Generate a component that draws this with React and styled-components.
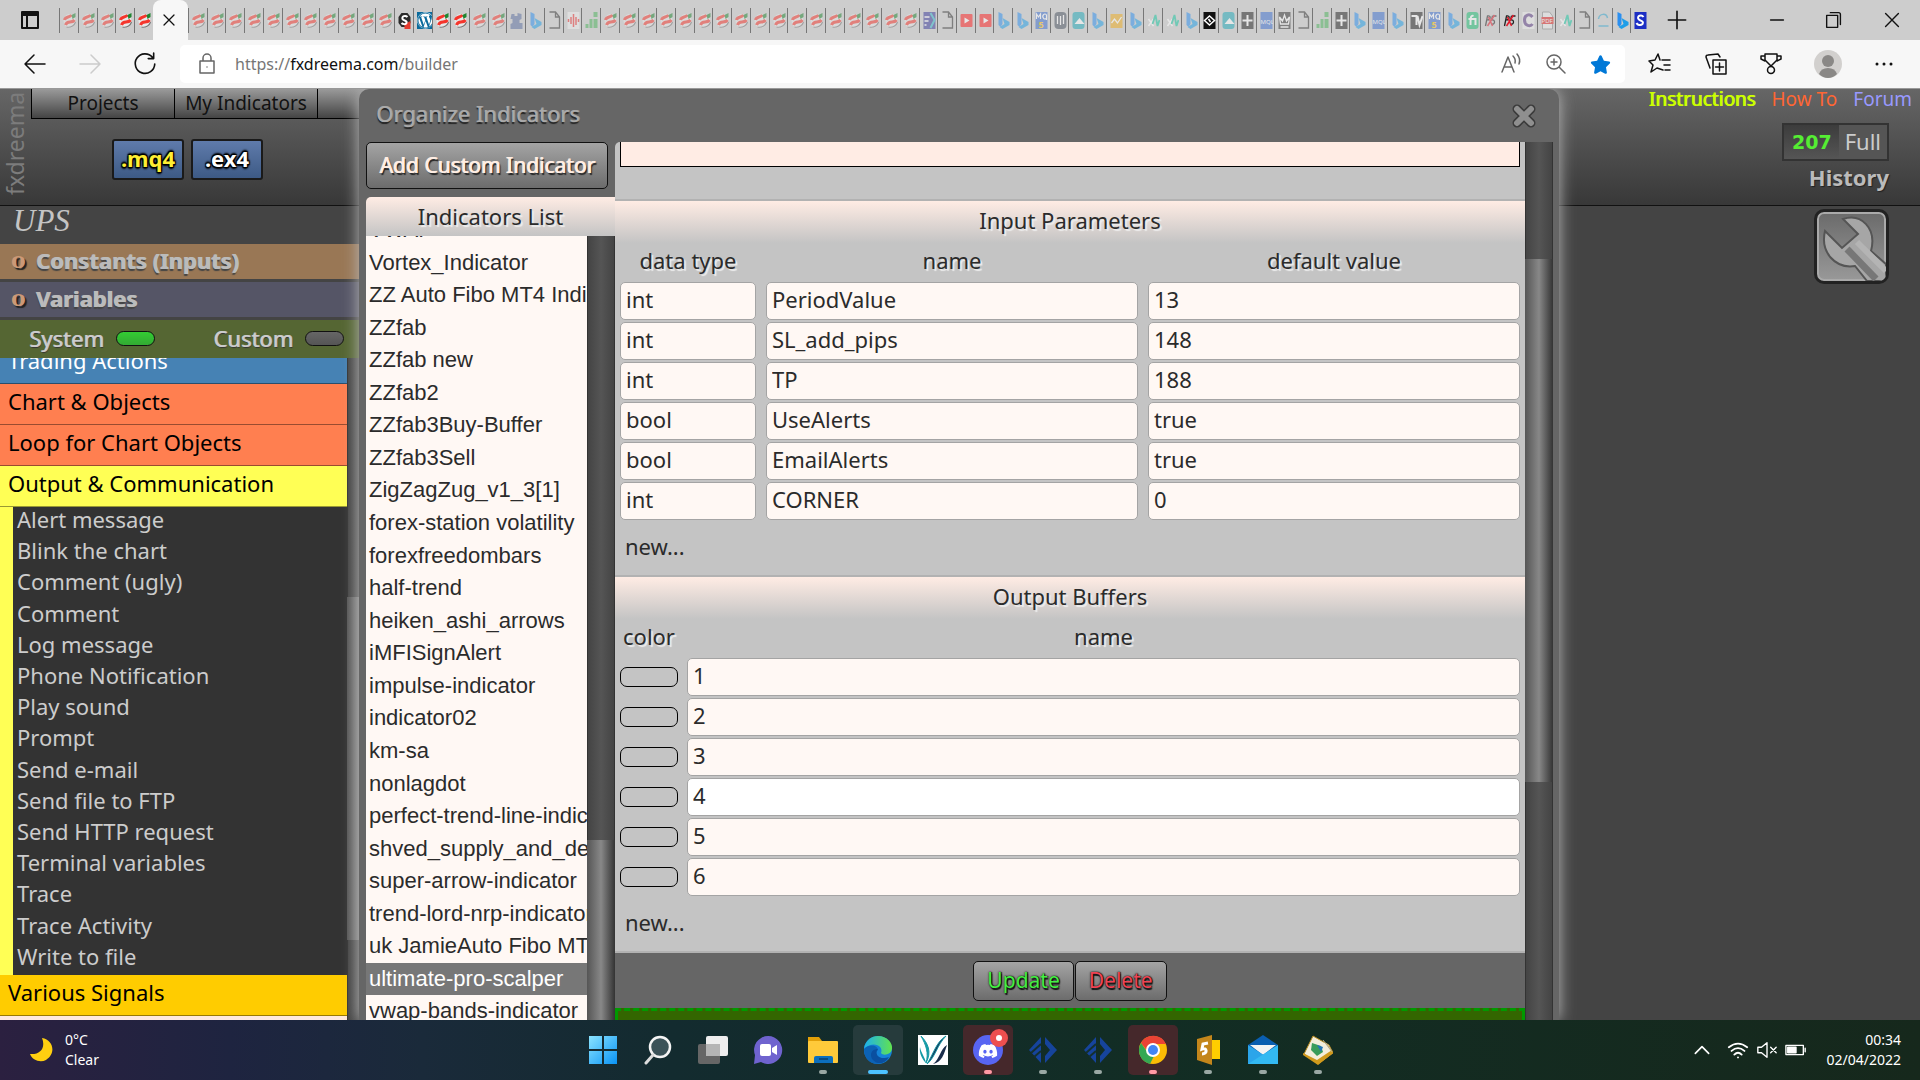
import React, { useLayoutEffect, useRef } from 'react';
import styled, { createGlobalStyle, css } from 'styled-components';
import { FaDiscord, FaStar, FaWordpress } from 'react-icons/fa6';

const repeat = (kind, count) => Array(count).fill(kind);

const LEFT_TABS = ['fx', 'fx', 'fx', 'fx!', 'fx!'];

const RIGHT_TABS = [
  ...repeat('fx', 11), 'stop!', 'wordpress!', 'fx!', 'fx!', 'fx', 'fx', 'puzzle', 'bing', 'doc', 'wave', 'bars',
  ...repeat('fx', 17), 'forex', 'doc', 'video', 'video', 'bing', 'bing', 'mql5', 'pill', 'teal', 'bing', 'gold',
  'bing', 'xa', 'xa', 'bing', 'diamond!', 'teal', 'plus', 'mql', 'crown', 'doc', 'bars', 'plus', 'bing', 'mql',
  'bing', 'tv', 'mql5', 'bing', 'fi', 'px', 'px!', 'cc', 'pdf', 'xa', 'doc', 'loop', 'bing!', 'ess!',
];

const CATEGORIES = [
  { label: 'Trading Actions', color: '#4682b4', light: true },
  { label: 'Chart & Objects', color: '#ff7f50' },
  { label: 'Loop for Chart Objects', color: '#ff7f50' },
  { label: 'Output & Communication', color: '#ffff55' },
];

const BLOCKS = [
  'Alert message', 'Blink the chart', 'Comment (ugly)', 'Comment', 'Log message', 'Phone Notification',
  'Play sound', 'Prompt', 'Send e-mail', 'Send file to FTP', 'Send HTTP request', 'Terminal variables',
  'Trace', 'Trace Activity', 'Write to file',
];

const INDICATORS = [
  'VWAP', 'Vortex_Indicator', 'ZZ Auto Fibo MT4 Indicator', 'ZZfab', 'ZZfab new', 'ZZfab2', 'ZZfab3Buy-Buffer',
  'ZZfab3Sell', 'ZigZagZug_v1_3[1]', 'forex-station volatility', 'forexfreedombars', 'half-trend',
  'heiken_ashi_arrows', 'iMFISignAlert', 'impulse-indicator', 'indicator02', 'km-sa', 'nonlagdot',
  'perfect-trend-line-indicator', 'shved_supply_and_demand', 'super-arrow-indicator', 'trend-lord-nrp-indicator',
  'uk JamieAuto Fibo MT4', 'ultimate-pro-scalper', 'vwap-bands-indicator',
];

const PARAMS = [
  ['int', 'PeriodValue', '13'],
  ['int', 'SL_add_pips', '148'],
  ['int', 'TP', '188'],
  ['bool', 'UseAlerts', 'true'],
  ['bool', 'EmailAlerts', 'true'],
  ['int', 'CORNER', '0'],
];

const BUFFERS = ['1', '2', '3', '4', '5', '6'];

const FAVICONS = {
  fx: <>
    <ellipse cx="6" cy="10" rx="6" ry="7" fill="#e8e8e8" />
    <path d="M3 16C8 17 11 14 12 11" stroke="#777" strokeWidth="1.200" fill="none" />
    <path d="M1 9C2 5 6 7 8 4" stroke="#f5352c" strokeWidth="3" fill="none" />
    <path d="M2 14C4 9 8 13 11 9" stroke="#f5352c" strokeWidth="3" fill="none" />
    <path d="M8 4L12 2V6L9 8Z" fill="#1f8530" />
  </>,
  stop: <>
    <path d="M3 2H9L12 6V12L9 16H3L0 12V6Z" fill="#2b2b2b" />
    <path d="M6 13L12 10V18H6Z" fill="#e33b2e" />
    <path d="M9 6C7 4 3 5 4 8C5 10 9 9 8 12C7 14 4 13 3 12" stroke="#fff" strokeWidth="2" fill="none" />
  </>,
  puzzle: <path d="M1 3H4V5H7V2L11 3V8L9 9V12H12V18H0V13L2 12V8H0Z" fill="#5b6fa0" />,
  bing: <>
    <path d="M1 1L5 3V13L3 16L1 14Z" fill="#2b8ff0" />
    <path d="M5 7L12 11V14L5 18L2 16L7 13Z" fill="#1f9ee8" />
  </>,
  doc: <path d="M1 1H7L11 6V17H1M7 1V6H11" stroke="#333" strokeWidth="1.300" fill="none" />,
  wave: <>
    <rect y="1" width="12" height="17" fill="#f0f0f0" />
    <path d="M1 8V11M3.500 6V13M6 3V16M8.500 6V14M11 8V11" stroke="#e33" strokeWidth="1.500" />
  </>,
  bars: <path d="M0 13H3V17H0ZM4 8H7V17H4ZM8 1H12V6H8ZM8 8H12V17H8Z" fill="#4cb25a" />,
  forex: <>
    <rect y="1" width="12" height="17" fill="#3a3a9a" />
    <path d="M1 6H6M1 10H5M1 14H3" stroke="#fff" strokeWidth="1.500" />
    <path d="M7 2L11 9L7 17" stroke="#3bc" strokeWidth="2" fill="none" />
  </>,
  video: <>
    <rect y="3" width="12" height="13" rx="1" fill="#ff1f1f" />
    <path d="M4 6.500L9 9.500L4 12.500Z" fill="#fff" />
  </>,
  mql5: <>
    <rect y="1" width="12" height="17" fill="#3c6fd0" />
    <path d="M1 8V3L3 6L5 3V8M11 7A2 2.500 0 1 1 11 4V9" stroke="#fff" strokeWidth="1.200" fill="none" />
    <text x="3" y="17" fontSize="9" fontWeight="700" fill="#ffc400">5</text>
  </>,
  mql: <>
    <rect y="1" width="12" height="17" fill="#3c6fd0" />
    <text x="0" y="13" fontSize="6" fill="#fff">MQL</text>
  </>,
  pill: <>
    <rect y="1" width="12" height="17" rx="4" fill="#4a5260" />
    <path d="M3 5V13M6 5V14M9 4V13" stroke="#fff" strokeWidth="1.300" />
  </>,
  teal: <>
    <rect y="1" width="12" height="17" rx="3" fill="#1fa8b8" />
    <path d="M2 13L7 7L12 13Z" fill="#fff" />
  </>,
  gold: <>
    <rect y="3" width="12" height="14" fill="#f0ad1e" />
    <path d="M1 12L4 8L7 12L11 6" stroke="#fff" strokeWidth="1.300" fill="none" />
  </>,
  xa: <>
    <path d="M1 8L6 15M6 8L1 15" stroke="#fff" strokeWidth="1.500" />
    <path d="M5 13L8 4L10 15L12 9" stroke="#16c7a0" strokeWidth="1.800" fill="none" />
  </>,
  diamond: <>
    <rect y="1" width="12" height="17" fill="#111" />
    <path d="M1 9.500L6 5L11 9.500L6 14ZM5 8L7 11" stroke="#fff" strokeWidth="1.500" fill="none" />
  </>,
  plus: <>
    <rect y="1" width="12" height="17" fill="#222" />
    <path d="M1 9.500H11M6 4V15" stroke="#fff" strokeWidth="2" />
  </>,
  crown: <>
    <rect y="1" width="12" height="17" fill="#333" />
    <path d="M1 6L4 10L6 4L8 10L11 6L10 13H2ZM2 16H10" stroke="#fff" strokeWidth="1.300" fill="none" />
  </>,
  tv: <>
    <rect y="1" width="12" height="17" fill="#222" />
    <path d="M1 5H6V14M7 5L9 14L12 5" stroke="#fff" strokeWidth="2" fill="none" />
  </>,
  fi: <>
    <rect y="1" width="12" height="17" rx="3" fill="#1dbf73" />
    <path d="M7 5C4 4 4 7 4 14M2 8H9V14" stroke="#fff" strokeWidth="2" fill="none" />
  </>,
  px: <>
    <path d="M1 15L3 5C7 4 6 9 3 9M8 5H12M8 5L7 9C11 8 11 14 7 13" stroke="#222" strokeWidth="1.300" fill="none" />
    <path d="M4 6L8 15M10 4L3 15" stroke="#e31b2c" strokeWidth="1.500" />
  </>,
  cc: <>
    <rect y="1" width="12" height="17" fill="#eee" />
    <path d="M10 6C7 2 2 4 2 9C2 15 8 16 10 13" stroke="#5b3b85" strokeWidth="3" fill="none" />
  </>,
  pdf: <>
    <path d="M1 1H8L11 5V18H1Z" fill="#eee" stroke="#888" />
    <rect y="6" width="12" height="7" fill="#e02020" />
    <text x="0" y="12" fontSize="6" fill="#fff">PDF</text>
  </>,
  loop: <path d="M1 8C2 2 9 2 10 7M1 15H11" stroke="#35a7cf" strokeWidth="1.500" fill="none" />,
  ess: <>
    <rect y="1" width="12" height="17" fill="#1d2fc4" />
    <path d="M9 6C7 3 2 5 4 8C5 10 10 10 8 13C6 15 3 14 2 12" stroke="#fff" strokeWidth="2" fill="none" />
  </>,
};

const Favicon = ({ kind }) => {
  const name = kind.replace('!', '');
  const faded = !kind.endsWith('!');
  if (name === 'wordpress') {
    return <WordpressBox><FaWordpress size={17} /></WordpressBox>;
  }
  return (
    <FaviconSvg $faded={faded} width="13" height="19" viewBox="0 0 12 19">{FAVICONS[name]}</FaviconSvg>
  );
};

const Line = ({ d, size = 24, color = '#111', width = 1.5, children }) => (
  <svg width={size} height={size} viewBox="0 0 24 24" fill="none" stroke={color} strokeWidth={width}
    strokeLinecap="round" strokeLinejoin="round" aria-hidden="true">
    <path d={d} />
    {children}
  </svg>
);

// A pane that opens already scrolled down by `start` pixels
const ScrollPane = ({ start = 0, children, as: Pane }) => {
  const ref = useRef(null);
  useLayoutEffect(() => {
    ref.current.scrollTop = start;
  }, [start]);
  return <Pane ref={ref}>{children}</Pane>;
};

const Browser = () => (
  <>
    <TabStrip>
      <IconButton aria-label="Tab actions">
        <Line size={24} width={2} d="M4 4H20V20H4ZM9 8V20">
          <path d="M4 5H20V7H4Z" fill="#111" />
        </Line>
      </IconButton>
      <TabGroup $count={LEFT_TABS.length}>
        {LEFT_TABS.map((kind, i) => <Tab key={i}><Favicon kind={kind} /></Tab>)}
      </TabGroup>
      <ActiveTab>
        <IconButton aria-label="Close tab"><Line size={20} d="M6 6L18 18M18 6L6 18" /></IconButton>
      </ActiveTab>
      <TabGroup $count={RIGHT_TABS.length} $grow>
        {RIGHT_TABS.map((kind, i) => <Tab key={i}><Favicon kind={kind} /></Tab>)}
      </TabGroup>
      <WindowButtons>
        <IconButton aria-label="New tab"><Line size={26} d="M4 12H20M12 4V20" /></IconButton>
        <span />
        <IconButton aria-label="Minimize"><Line size={22} d="M5 12H19" /></IconButton>
        <IconButton aria-label="Restore">
          <Line size={22} d="M4 7H16V20H4ZM8 4H17Q19 4 19 6V17" />
        </IconButton>
        <IconButton aria-label="Close"><Line size={22} d="M5 5L19 19M19 5L5 19" /></IconButton>
      </WindowButtons>
    </TabStrip>
    <Toolbar>
      <NavButtons>
        <IconButton aria-label="Back"><Line d="M22 12H2M11 3L2 12L11 21" /></IconButton>
        <IconButton aria-label="Forward"><Line color="#ccc" d="M2 12H22M13 3L22 12L13 21" /></IconButton>
        <IconButton aria-label="Refresh"><Line size={26} d="M19 6A9 9 0 1 0 21 12M20 2V7H15" /></IconButton>
      </NavButtons>
      <AddressBar>
        <Line size={24} color="#666" d="M5 9H19V21H5ZM8 9V6A4 4 0 0 1 16 6V9M12 15V15.100" />
        <Address>https://<b>fxdreema.com</b>/builder</Address>
        <BarIcon aria-label="Read aloud">
          <Line color="#666" d="M3 20L9 5L15 20M5 15H13M14 4Q17 7 16 11M18 2Q22 7 20 12" />
        </BarIcon>
        <BarIcon aria-label="Zoom">
          <Line color="#666" d="M17 10A7 7 0 1 1 3 10A7 7 0 1 1 17 10M15 15L21 21M7 10H13M10 7V13" />
        </BarIcon>
        <BarIcon aria-label="Favorite"><FaStar size={21} color="#0078d7" /></BarIcon>
      </AddressBar>
      <ToolIcons>
        <IconButton aria-label="Favorites">
          <Line d="M14 8H22M16 13H22M17 18H22M15 18L9 16L3 20L5 13L1 9L7 8L10 2L12 8" />
        </IconButton>
        <IconButton aria-label="Collections">
          <Line d="M9 8H22V22H9ZM15.500 11V19M11.500 15H19.500M6 16L2 5Q2 3 4 3L14 2L16 5" />
        </IconButton>
        <IconButton aria-label="Rewards">
          <Line d="M5 2H17V8L11 14L5 8ZM5 4H1V7L5 9M17 4H21V7L17 9M14.500 18A3.500 3.500 0 1 1 7.500 18A3.500 3.500 0 1 1 14.500 18" />
        </IconButton>
        <IconButton aria-label="Profile">
          <svg width="28" height="28" viewBox="0 0 28 28">
            <circle cx="14" cy="14" r="14" fill="#d2d0ce" />
            <circle cx="14" cy="11" r="6" fill="#8a8886" />
            <path d="M5 24Q7 18 14 18T23 24Q19 28 14 28T5 24Z" fill="#8a8886" />
          </svg>
        </IconButton>
        <IconButton aria-label="More"><Line width={3} d="M5 12V12.100M12 12V12.100M19 12V12.100" /></IconButton>
      </ToolIcons>
    </Toolbar>
  </>
);

const Sidebar = () => (
  <Side>
    <ProjectName>UPS</ProjectName>
    <SideRow $color="#997755"><Ring>o</Ring>Constants (Inputs)</SideRow>
    <SideRow $color="#555566"><Ring>o</Ring>Variables</SideRow>
    <Filters>
      <label>System <Toggle type="checkbox" defaultChecked /></label>
      <label>Custom <Toggle type="checkbox" /></label>
    </Filters>
    <SideBody>
      <ScrollPane as={CategoryPane} start={15}>
        {CATEGORIES.map(({ label, color, light }) => (
          <Category key={label} $color={color} $light={light}>{label}</Category>
        ))}
        <BlockList>
          {BLOCKS.map(block => <li key={block}>{block}</li>)}
        </BlockList>
        <Category $color="#ffcc00">Various Signals</Category>
        <Category $color="#ffe9dc" aria-label="More signals" />
      </ScrollPane>
      <ScrollTrack>
        <TrackSpace $size={239} />
        <ScrollThumb $size={343} />
        <TrackSpace $size={80} />
      </ScrollTrack>
    </SideBody>
  </Side>
);

const Organizer = () => (
  <Modal role="dialog" aria-label="Organize Indicators">
    <ModalHeader>
      <h2>Organize Indicators</h2>
      <IconButton aria-label="Close dialog">
        <svg width="26" height="26" viewBox="0 0 26 26">
          <path d="M6 6L20 20M20 6L6 20" stroke="#3a3a3a" strokeWidth="9" strokeLinecap="round" />
          <path d="M6 6L20 20M20 6L6 20" stroke="#8f8f8f" strokeWidth="6" strokeLinecap="round" />
        </svg>
      </IconButton>
    </ModalHeader>
    <ModalBody>
      <ListColumn>
        <AddButton>Add Custom Indicator</AddButton>
        <ListTitle>Indicators List</ListTitle>
        <ListBody>
          <ScrollPane as={IndicatorPane} start={22}>
            <IndicatorList>
              {INDICATORS.map(name => (
                <Indicator key={name} $selected={name === 'ultimate-pro-scalper'}>{name}</Indicator>
              ))}
            </IndicatorList>
          </ScrollPane>
          <ScrollTrack>
            <TrackSpace $size={604} />
            <ScrollThumb $size={180} />
          </ScrollTrack>
        </ListBody>
      </ListColumn>
      <Details>
        <Description aria-label="Description" />
        <Section>
          <SectionTitle>Input Parameters</SectionTitle>
          <ParamGrid>
            <Label>data type</Label>
            <Label>name</Label>
            <Label>default value</Label>
            {PARAMS.map(([type, name, value]) => (
              <React.Fragment key={name}>
                <Field defaultValue={type} aria-label={`${name} type`} />
                <Field defaultValue={name} aria-label={`${name} name`} />
                <Field defaultValue={value} aria-label={`${name} default value`} />
              </React.Fragment>
            ))}
          </ParamGrid>
          <NewButton>new...</NewButton>
        </Section>
        <Section>
          <SectionTitle>Output Buffers</SectionTitle>
          <BufferGrid>
            <Label>color</Label>
            <Label>name</Label>
            {BUFFERS.map(buffer => (
              <React.Fragment key={buffer}>
                <ColorPill aria-label={`Color of buffer ${buffer}`} />
                <Field defaultValue={buffer} aria-label={`Name of buffer ${buffer}`} $active={buffer === '4'} />
              </React.Fragment>
            ))}
          </BufferGrid>
          <NewButton>new...</NewButton>
        </Section>
        <Actions>
          <ActionButton $color="#44ee44">Update</ActionButton>
          <ActionButton $color="#ee4455">Delete</ActionButton>
        </Actions>
        <DropArea />
      </Details>
      <ScrollTrack>
        <TrackSpace $size={117} />
        <ScrollThumb $size={523} />
        <TrackSpace $size={238} />
      </ScrollTrack>
    </ModalBody>
  </Modal>
);

const Builder = () => (
  <Page>
    <PageHeader>
      <Brand href="#">fxdreema</Brand>
      <HeaderLeft>
        <Menu>
          <MenuItem $wide>Projects</MenuItem>
          <MenuItem $wide>My Indicators</MenuItem>
          <MenuItem aria-label="More menus" />
        </Menu>
        <Exports>
          <ExportButton $color="#ffee33">.mq4</ExportButton>
          <ExportButton $color="#ffffff">.ex4</ExportButton>
        </Exports>
      </HeaderLeft>
      <HeaderRight>
        <Links>
          <HeaderLink href="#" $color="#ccff00" $strong>Instructions</HeaderLink>
          <HeaderLink href="#" $color="#ff6633">How To</HeaderLink>
          <HeaderLink href="#" $color="#9999ff">Forum</HeaderLink>
        </Links>
        <Counter><b>207</b><span>Full</span></Counter>
        <History>History</History>
      </HeaderRight>
    </PageHeader>
    <Workspace>
      <Sidebar />
      <ToolButton aria-label="Settings">
        <svg width="69" height="69" viewBox="0 0 69 69">
          <path d="M26 7C44 1 60 16 54 39L69 52V69H50L38 54C18 57 3 40 8 19L25 36L41 22Z"
            fill="#a6a6a6" stroke="#555" strokeWidth="2" />
          <path d="M30 37L59 67" stroke="#777" strokeWidth="7" />
          <path d="M40 30L69 59" stroke="#b4b4b4" strokeWidth="6" />
        </svg>
      </ToolButton>
    </Workspace>
    <Organizer />
  </Page>
);

const EaGlyph = () => (
  <svg width="30" height="30" viewBox="0 0 30 30">
    <path d="M13 2V28L1 15ZM17 2L29 15L17 28V21L22 15L17 9Z" fill="#16449c" />
    <path d="M3 18L13 9M6 22L13 16" stroke="#14302f" strokeWidth="2" />
  </svg>
);

const APPS = [
  { name: 'Start', icon: <>
    <defs>
      <linearGradient id="win" x1="0" y1="0" x2="1" y2="1">
        <stop offset="0" stopColor="#8be4ff" /><stop offset="1" stopColor="#0a93f5" />
      </linearGradient>
    </defs>
    <path d="M1 1H14V14H1ZM16 1H29V14H16ZM1 16H14V29H1ZM16 16H29V29H16Z" fill="url(#win)" />
  </> },
  { name: 'Search', icon: <>
    <circle cx="17" cy="12" r="10" fill="#3b5258" stroke="#f4f4f4" strokeWidth="2.500" />
    <path d="M10 20L3 28" stroke="#ddd" strokeWidth="3" strokeLinecap="round" />
  </> },
  { name: 'Task view', icon: <>
    <rect y="9" width="22" height="20" rx="2" fill="#666" />
    <rect x="8" y="1" width="22" height="20" rx="2" fill="#eee" />
    <rect x="8" y="9" width="14" height="12" fill="#b5b5b5" />
  </> },
  { name: 'Chat', icon: <>
    <path d="M15 1A14 14 0 1 1 8 27L1 29L2 20A14 14 0 0 1 15 1Z" fill="#6f63cf" />
    <rect x="7" y="9" width="11" height="12" rx="2" fill="#fff" />
    <path d="M19 13L24 10V20L19 17Z" fill="#fff" />
  </> },
  { name: 'File Explorer', running: true, icon: <>
    <path d="M0 2H11L14 6V14H0Z" fill="#e3a008" />
    <rect y="6" width="30" height="22" rx="1" fill="#ffca3a" />
    <path d="M6 28V23Q6 21 8 21H23Q25 21 25 23V28Z" fill="#0c6fbd" />
    <path d="M11 24H20" stroke="#0a4a80" strokeWidth="2" />
  </> },
  { name: 'Edge', running: true, state: 'active', icon: <>
    <defs>
      <linearGradient id="edge" x1="0" y1="0" x2="1" y2="0">
        <stop offset="0" stopColor="#1cb0ee" /><stop offset="1" stopColor="#62e34e" />
      </linearGradient>
    </defs>
    <circle cx="15" cy="15" r="14" fill="#1583d8" />
    <path d="M1 14C2 5 9 1 15 1C24 1 30 8 29 14C28 20 20 21 18 18C21 11 10 5 1 14Z" fill="url(#edge)" />
    <path d="M1 14C7 8 15 11 15 15C11 18 14 27 25 24C19 32 1 31 1 14Z" fill="#0c62b5" />
    <path d="M15 14C11 18 15 26 26 22C19 33 8 27 8 20C8 16 11 14 15 14Z" fill="#0a4fa0" />
  </> },
  { name: 'Trading terminal', icon: <>
    <rect width="30" height="30" fill="#fff" />
    <path d="M3 1C10 8 14 17 8 28C11 18 8 10 3 1Z" fill="#149aa5" stroke="#149aa5" />
    <path d="M2 12C1 18 4 24 8 28C7 22 3 18 2 12Z" fill="#149aa5" />
    <path d="M28 1C18 7 16 18 9 29C17 23 19 10 28 1Z" fill="#16365c" stroke="#149aa5" />
    <path d="M29 10C22 14 22 24 15 29C24 27 26 19 29 10Z" fill="#1a2d4a" />
  </> },
  { name: 'Discord', running: true, state: 'alert', icon: 'discord' },
  { name: 'MetaTrader', running: true, icon: 'ea' },
  { name: 'MetaTrader 2', running: true, icon: 'ea' },
  { name: 'Chrome', running: true, state: 'alert', icon: <>
    <circle cx="15" cy="15" r="14" fill="#fbbc05" />
    <path d="M3 8A14 14 0 0 1 28 9H15L10 17Z" fill="#ea4335" />
    <path d="M3 8L10 18L16 21L12 29A14 14 0 0 1 3 8Z" fill="#34a853" />
    <circle cx="15" cy="15" r="7" fill="#fff" />
    <circle cx="15" cy="15" r="5" fill="#4285f4" />
  </> },
  { name: 'MetaEditor', running: true, icon: <>
    <path d="M12 5H27V24H12Z" fill="#ffce00" />
    <path d="M4 4L19 0V30L4 25Z" fill="#c4861b" />
    <path d="M15 8L10 9L9 14C14 12 15 19 9 19" stroke="#fff" strokeWidth="3" fill="none" />
  </> },
  { name: 'Mail', running: true, icon: <>
    <path d="M0 10L15 0L30 10V29H0Z" fill="#0a5eb0" />
    <path d="M2 10H28L15 20Z" fill="#f3f3f3" />
    <path d="M0 10L30 29H0Z" fill="#2ba5ea" />
    <path d="M30 10L0 29H30Z" fill="#33b9f2" />
  </> },
  { name: 'MT4', running: true, icon: <>
    <path d="M10 1L26 10L30 18L15 29L1 19Z" fill="#f4eedb" stroke="#b98a1d" strokeWidth="1" />
    <path d="M0 18L14 25L29 15L30 18L15 30L0 20Z" fill="#d19a1c" />
    <path d="M20 5L29 17M23 8L28 15" stroke="#b9ac88" strokeWidth="1" />
    <path d="M9 8L18 11L20 17L14 21L8 15Z" fill="#3a9c5a" />
    <path d="M14 10L20 12L18 17Z" fill="#2475b8" />
  </> },
];

const AppIcon = ({ icon }) => {
  if (icon === 'ea') return <EaGlyph />;
  if (icon === 'discord') {
    return (
      <svg width="40" height="30" viewBox="0 0 40 30" overflow="visible">
        <circle cx="20" cy="15" r="15" fill="#5865f2" />
        <FaDiscord x="10" y="6" size={20} color="#fff" />
        <circle cx="31" cy="3" r="9" fill="#ed4f4f" />
        <circle cx="31" cy="3" r="3" fill="#fff" />
      </svg>
    );
  }
  return <svg width="30" height="30" viewBox="0 0 30 30">{icon}</svg>;
};

const Taskbar = () => (
  <Bar>
    <Weather>
      <svg width="24" height="26" viewBox="0 0 24 26">
        <path d="M13 1C25 3 27 17 17 23C11 26 3 23 1 17C11 18 17 11 13 1Z" fill="#ffcf10" />
      </svg>
      <div>
        <p>0°C</p>
        <p>Clear</p>
      </div>
    </Weather>
    <Apps>
      {APPS.map(({ name, icon, running, state }) => (
        <AppButton key={name} aria-label={name} $state={state}>
          <AppIcon icon={icon} />
          {running && <Mark $state={state} />}
        </AppButton>
      ))}
    </Apps>
    <Tray>
      <IconButton aria-label="Show hidden icons"><Line size={20} color="#fff" width={2} d="M4 16L12 8L20 16" /></IconButton>
      <Line size={22} color="#fff" width={2} d="M2 9Q12 1 22 9M5 13Q12 7 19 13M8 17Q12 13 16 17M12 20V20.100" />
      <Line size={22} color="#fff" d="M2 9H6L12 4V20L6 15H2ZM16 9L22 15M22 9L16 15" />
      <Line size={22} color="#fff" d="M1 7H20V17H1ZM22 10V14">
        <path d="M3 9H12V15H3Z" fill="#fff" />
      </Line>
      <Clock>
        <p>00:34</p>
        <p>02/04/2022</p>
      </Clock>
    </Tray>
  </Bar>
);

const App = () => (
  <Screen>
    <GlobalStyle />
    <Browser />
    <Builder />
    <Taskbar />
  </Screen>
);

export default App;

const GlobalStyle = createGlobalStyle`
  * {
    box-sizing: border-box;
  }

  body {
    margin: 0;
    font-family: "Noto Sans", "Open Sans", sans-serif;
    font-size: 22px;
    color: #2b2b2b;
  }

  button, input, textarea {
    font: inherit;
    color: inherit;
  }

  h1, h2, h3, p, ul {
    margin: 0;
    padding: 0;
    font-weight: 400;
    list-style: none;
  }

  a {
    text-decoration: none;
  }

  svg {
    flex: none;
    display: block;
  }
`;

const Screen = styled.div`
  display: flex;
  flex-direction: column;
  height: 100vh;
  overflow: hidden;
`;

const IconButton = styled.button`
  display: flex;
  align-items: center;
  justify-content: center;
  padding: 0;
  border: 0;
  background: none;
`;

const TabStrip = styled.div`
  display: flex;
  flex: none;
  height: 40px;
  background: #cdcdcd;

  > ${IconButton} {
    width: 59px;
  }
`;

const TabGroup = styled.div`
  display: grid;
  grid-template-columns: repeat(${p => p.$count}, minmax(0, 1fr));
  align-items: center;
  ${p => (p.$grow ? css`flex: 1;` : css`width: 94px;`)}
`;

const Tab = styled.div`
  display: flex;
  align-items: center;
  height: 25px;
  padding-left: 3px;
  border-left: 1px solid #777;
  overflow: hidden;
`;

const FaviconSvg = styled.svg`
  opacity: ${p => (p.$faded ? 0.5 : 1)};
`;

const WordpressBox = styled.span`
  display: flex;
  color: #fff;
  background: #0a6a9c;
`;

const ActiveTab = styled.div`
  display: flex;
  justify-content: center;
  width: 35px;
  padding-right: 4px;
  background: #f7f7f7;
  border-radius: 8px 8px 0 0;
`;

const WindowButtons = styled.div`
  display: grid;
  grid-template-columns: 56px 44px 56px 58px 57px;
  width: 271px;
`;

const Toolbar = styled.div`
  display: flex;
  align-items: center;
  flex: none;
  height: 49px;
  background: #f7f7f7;
  border-bottom: 1px solid #999;
`;

const NavButtons = styled.div`
  display: grid;
  grid-template-columns: repeat(3, 55px);
  width: 180px;
  padding-left: 7px;
`;

const AddressBar = styled.div`
  display: flex;
  align-items: center;
  flex: 1;
  height: 38px;
  padding: 0 2px 0 15px;
  background: #fff;
  border-radius: 5px;
`;

const Address = styled.p`
  flex: 1;
  padding-left: 16px;
  font-size: 16px;
  color: #767676;

  b {
    font-weight: 400;
    color: #111;
  }
`;

const BarIcon = styled(IconButton)`
  width: 45px;
`;

const ToolIcons = styled.div`
  display: grid;
  grid-template-columns: repeat(5, 56px);
  width: 295px;
  padding-left: 7px;
`;

const Page = styled.main`
  position: relative;
  display: flex;
  flex-direction: column;
  flex: 1;
  min-height: 0;
  overflow: hidden;
  background: #444;
`;

const PageHeader = styled.header`
  display: flex;
  justify-content: space-between;
  flex: none;
  height: 117px;
  background: linear-gradient(#666, #383838);
  border-bottom: 1px solid #111;
`;

const Brand = styled.a`
  flex: none;
  width: 31px;
  padding: 10px 2px 0;
  writing-mode: vertical-rl;
  transform: rotate(180deg);
  font-size: 23px;
  line-height: 27px;
  color: #7c7c7c;
`;

const HeaderLeft = styled.div`
  flex: 1;
`;

const Menu = styled.nav`
  display: flex;
  height: 30px;
`;

const MenuItem = styled.button`
  width: ${p => (p.$wide ? 143 : 286)}px;
  padding: 0;
  border: solid #000;
  border-width: 0 0 1px 1px;
  background: linear-gradient(#9a9a9a, #444);
  font-size: 19px;
  line-height: 24px;
  color: #111;

  &:not(:empty) {
    padding-bottom: 2px;
  }
`;

const Exports = styled.div`
  display: flex;
  gap: 7px;
  padding: 20px 81px;
`;

const ExportButton = styled.button`
  width: 72px;
  height: 41px;
  padding: 0 0 3px;
  border: 2px solid #1a1a1a;
  border-radius: 3px;
  background: linear-gradient(#5f7bab, #3d5a85);
  font-size: 22px;
  font-weight: 700;
  line-height: 30px;
  color: ${p => p.$color};
  text-shadow: 1px 1px 1px #000, -1px -1px 1px #000, 1px -1px 1px #000, -1px 1px 1px #000, 0 2px 2px #000, 0 -2px 2px #000;
`;

const HeaderRight = styled.div`
  display: flex;
  flex-direction: column;
  align-items: flex-end;
`;

const Links = styled.nav`
  display: flex;
  gap: 16px;
  height: 34px;
  padding-right: 8px;
`;

const HeaderLink = styled.a`
  font-size: 19px;
  line-height: 20px;
  color: ${p => p.$color};
  text-shadow: ${p => (p.$strong ? '1px 0 currentColor' : 'none')};
`;

const Counter = styled.button`
  display: flex;
  height: 38px;
  margin-right: 31px;
  padding: 0;
  border: 2px solid #333;
  background: #555;
  line-height: 32px;

  b {
    padding: 0 7px 0 8px;
    background: linear-gradient(#3c3c3c, #555);
    font-family: "DejaVu Sans", sans-serif;
    font-size: 19px;
    line-height: 34px;
    color: #55ee33;
  }

  span {
    padding: 0 6px;
    color: #ccc;
  }
`;

const History = styled.button`
  margin-right: 31px;
  padding: 0;
  border: 0;
  background: none;
  font-weight: 700;
  line-height: 32px;
  color: #bbb;
  text-shadow: 1px 1px 1px #222;
`;

const Workspace = styled.div`
  display: flex;
  justify-content: space-between;
  flex: 1;
  min-height: 0;
`;

const ToolButton = styled.button`
  width: 75px;
  height: 75px;
  margin: 3px 31px;
  padding: 0;
  border: 3px solid #222;
  border-radius: 10px;
  background: linear-gradient(#6a6a6a, #999);
  box-shadow: inset 0 0 0 2px #aaa;
  overflow: hidden;
`;

const Side = styled.aside`
  display: flex;
  flex-direction: column;
  width: 375px;
`;

const ProjectName = styled.h1`
  flex: none;
  height: 38px;
  padding-left: 13px;
  font-family: "Liberation Serif", serif;
  font-size: 31px;
  font-style: italic;
  line-height: 30px;
  color: #c4c4c4;
`;

const SideRow = styled.button`
  display: flex;
  align-items: center;
  flex: none;
  gap: 10px;
  height: 35px;
  margin-bottom: 3px;
  padding: 0 0 3px 11px;
  border: 0;
  background: ${p => p.$color};
  font-weight: 700;
  color: #bbb;
  text-shadow: 1px 0 #bbb, 0 2px 1px #444;
`;

const Ring = styled.span`
  font-family: "DejaVu Serif", serif;
  font-size: 22px;
  line-height: 22px;
  color: #cc9977;
  text-shadow: 2px 2px 1px #222;
`;

const Filters = styled.div`
  display: flex;
  justify-content: space-between;
  align-items: center;
  flex: none;
  height: 38px;
  padding: 0 31px 0 29px;
  background: #556633;
  color: #ccc;
  line-height: 26px;
  text-shadow: 1px 0 #bbb, 1px 1px 1px #333;

  label {
    display: flex;
    align-items: center;
    gap: 12px;
    padding-bottom: 2px;
  }
`;

const Toggle = styled.input`
  appearance: none;
  width: 39px;
  height: 15px;
  margin: 0;
  border: 1px solid #111;
  border-radius: 8px;
  background: linear-gradient(#666, #555);

  &:checked {
    background: linear-gradient(#3c3, #3a3);
  }
`;

const SideBody = styled.div`
  display: flex;
  flex: 1;
  min-height: 0;
`;

const CategoryPane = styled.div`
  flex: 1;
  overflow: hidden;
`;

const Category = styled.button`
  display: block;
  width: 100%;
  height: 41px;
  padding: 0 8px 7px;
  border: 0;
  border-bottom: 1px solid rgba(0, 0, 0, 0.4);
  background: ${p => p.$color};
  text-align: left;
  color: ${p => (p.$light ? '#fff' : '#000')};
`;

const BlockList = styled.ul`
  display: grid;
  grid-auto-rows: 1fr;
  height: 468px;
  padding-left: 4px;
  border-left: 13px solid #ffff55;
  background: #333;
  line-height: 24px;
  color: #ccc;
`;

const ScrollTrack = styled.div`
  display: flex;
  flex-direction: column;
  flex: none;
  width: 28px;
`;

const TrackSpace = styled.div`
  flex: ${p => p.$size} 0 0;
  border: solid #333;
  border-width: 0 1px;
  background: linear-gradient(90deg, #444, #555 50%, #444);
`;

const ScrollThumb = styled.div`
  flex: ${p => p.$size} 0 0;
  background: linear-gradient(90deg, #555, #888 50%, #333);
`;

const Modal = styled.section`
  position: absolute;
  top: 0;
  right: 361px;
  bottom: 0;
  left: 359px;
  display: flex;
  flex-direction: column;
  padding: 0 6px 0 7px;
  border-radius: 10px 10px 0 0;
  background: #666;
  box-shadow: 0 0 16px #bbb;
`;

const ModalHeader = styled.div`
  display: flex;
  align-items: center;
  justify-content: space-between;
  flex: none;
  height: 53px;
  padding: 0 16px 0 10px;

  h2 {
    padding-bottom: 5px;
    font-size: 22px;
    color: #aaa;
    text-shadow: 1px 0 #999, 0 2px 1px #222;
  }
`;

const ModalBody = styled.div`
  display: flex;
  flex: 1;
  min-height: 0;
`;

const ListColumn = styled.div`
  display: flex;
  flex-direction: column;
  width: 249px;
`;

const buttonFace = css`
  padding: 0 0 2px;
  border: 1px solid #111;
  border-radius: 5px;
  background: linear-gradient(#a4a4a4, #6c6c6c);
  font-size: 21px;
  line-height: 30px;
`;

const AddButton = styled.button`
  ${buttonFace}
  flex: none;
  width: 242px;
  height: 47px;
  margin-bottom: 8px;
  color: #ffeee4;
  text-shadow: 1px 0 #ffeee4, 2px 2px 1px #222;
`;

const ListTitle = styled.h3`
  flex: none;
  height: 39px;
  border-radius: 5px 0 0 0;
  background: linear-gradient(#ffece4, #c4c4c4);
  font-size: 22px;
  line-height: 39px;
  text-align: center;
  text-shadow: 2px 2px 1px #eee;
`;

const ListBody = styled.div`
  display: flex;
  flex: 1;
  min-height: 0;
`;

const IndicatorPane = styled.div`
  flex: 1;
  min-width: 0;
  overflow: hidden;
  background: #fff8f4;
`;

const IndicatorList = styled.ul`
  display: grid;
  grid-auto-rows: 1fr;
  height: 814px;
  font-family: "Liberation Sans", sans-serif;
`;

const Indicator = styled.li`
  padding-left: 3px;
  line-height: 32px;
  white-space: nowrap;
  color: ${p => (p.$selected ? '#fff' : 'inherit')};
  background: ${p => (p.$selected ? '#777' : 'none')};
`;

const Details = styled.div`
  display: flex;
  flex-direction: column;
  flex: 1;
  min-width: 0;
  overflow: hidden;
  border-radius: 5px 0 0 0;
  background: #c4c4c4;
`;

const Description = styled.textarea`
  display: block;
  flex: none;
  height: 25px;
  margin: 0 5px 32px;
  padding: 0;
  border: solid #000;
  border-width: 0 1px 1px;
  background: #ffece4;
  resize: none;
`;

const Section = styled.section`
  flex: none;
  border-top: 2px solid #b2b2b2;
`;

const SectionTitle = styled.h3`
  height: 42px;
  background: linear-gradient(#ffece4, #c4c4c4);
  font-size: 22px;
  line-height: 39px;
  text-align: center;
  text-shadow: 2px 2px 1px #eee;
`;

const FieldGrid = styled.div`
  display: grid;
  row-gap: 2px;
  padding: 0 5px;
`;

const ParamGrid = styled(FieldGrid)`
  grid-template-columns: 136px 1fr 1fr;
  column-gap: 10px;
`;

const BufferGrid = styled(FieldGrid)`
  grid-template-columns: 58px 1fr;
  column-gap: 9px;
  align-items: center;
`;

const Label = styled.span`
  height: 37px;
  line-height: 34px;
  text-align: center;
  text-shadow: 2px 2px 1px #eee;
`;

const Field = styled.input`
  width: 100%;
  min-width: 0;
  height: 38px;
  padding: 0 5px 4px;
  border: 1px solid #a4a4a4;
  border-radius: 5px;
  background: ${p => (p.$active ? '#fff' : '#fff8f4')};
`;

const ColorPill = styled.button`
  height: 20px;
  padding: 0;
  border: 1px solid #000;
  border-radius: 7px;
  background: none;
`;

const NewButton = styled.button`
  display: block;
  height: 55px;
  padding: 0 10px 3px;
  border: 0;
  background: none;
`;

const Actions = styled.div`
  display: flex;
  justify-content: center;
  flex: none;
  gap: 1px;
  height: 57px;
  padding-top: 8px;
  border-top: 2px solid #b2b2b2;
  background: #666;
`;

const ActionButton = styled.button`
  ${buttonFace}
  height: 40px;
  padding: 0 13px 2px;
  color: ${p => p.$color};
  text-shadow: 1px 0 1px #111, 1px 2px 1px #111, 0 0 2px #111;
`;

const DropArea = styled.div`
  flex: 1;
  border: 3px dashed #090;
  border-bottom: 0;
  background: #360;
`;

const Bar = styled.footer`
  display: grid;
  grid-template-columns: 1fr auto 1fr;
  align-items: center;
  flex: none;
  height: 60px;
  background: linear-gradient(90deg, #2b2040, #1e2440 12%, #1a2a3a 22%, #132b2f 35%, #122d24 60%, #16281c);
  font-size: 14px;
  line-height: 20px;
  color: #fff;
`;

const Weather = styled.div`
  display: flex;
  align-items: center;
  gap: 12px;
  padding-left: 29px;
`;

const Apps = styled.div`
  display: flex;
  gap: 5px;
`;

const AppButton = styled(IconButton)`
  position: relative;
  width: 50px;
  height: 50px;
  border-radius: 5px;
  background: ${p => ({ active: '#263b3c', alert: '#45282b' })[p.$state] || 'none'};
`;

const Mark = styled.span`
  position: absolute;
  bottom: 1px;
  left: 50%;
  width: ${p => (p.$state === 'active' ? 20 : 8)}px;
  height: 4px;
  border-radius: 2px;
  background: ${p => ({ active: '#4cc2ff', alert: '#ff99a4' })[p.$state] || '#9aa8a4'};
  transform: translateX(-50%);
`;

const Tray = styled.div`
  display: flex;
  align-items: center;
  justify-content: flex-end;
  gap: 7px;
  padding-right: 19px;

  ${IconButton} {
    margin-right: 8px;
  }
`;

const Clock = styled.div`
  margin-left: 13px;
  text-align: right;
`;
